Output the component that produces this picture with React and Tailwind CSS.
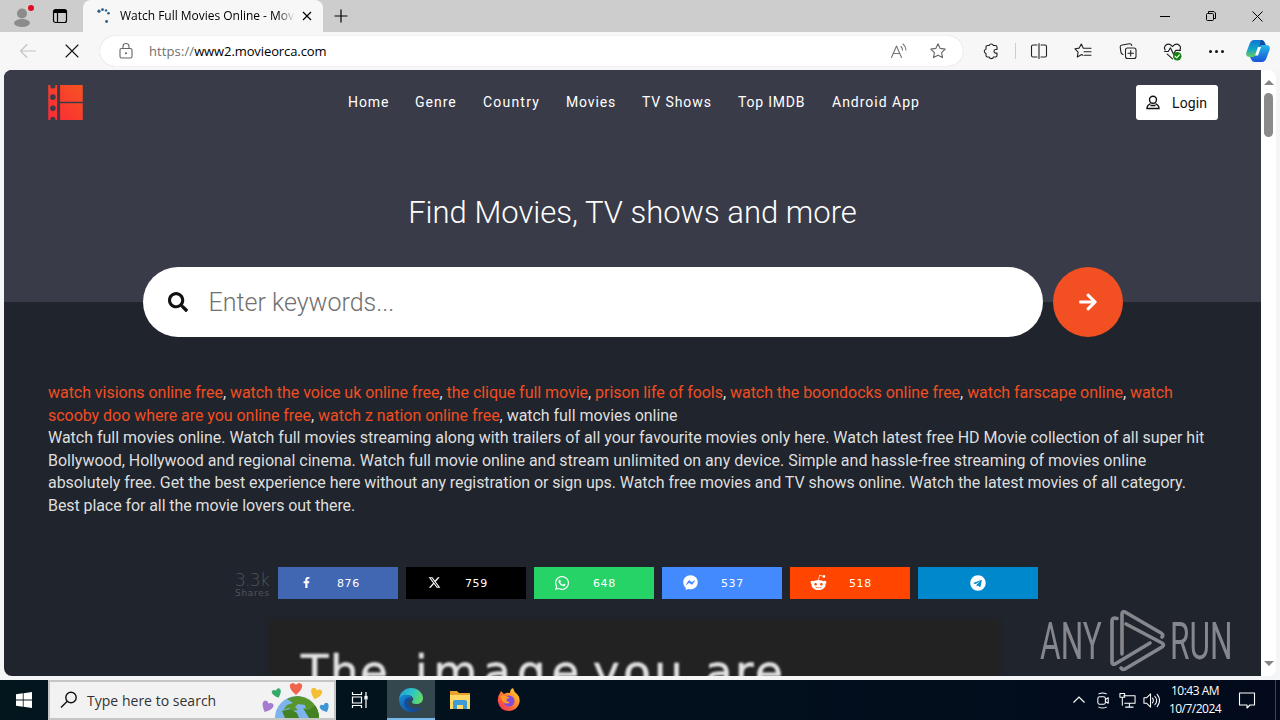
import React from 'react';
import { FaSearch, FaArrowRight, FaFacebookF, FaWhatsapp, FaFacebookMessenger, FaRedditAlien, FaTelegram } from 'react-icons/fa';
import { FaXTwitter } from 'react-icons/fa6';

const navLinks = [
    { name: 'Home', cls: 'w-[41px] tracking-[0.900px]' },
    { name: 'Genre', cls: 'w-[42px] tracking-[1px]' },
    { name: 'Country', cls: 'w-[57px] tracking-[1.200px]' },
    { name: 'Movies', cls: 'w-[50px] tracking-[0.850px]' },
    { name: 'TV Shows', cls: 'w-[70px] tracking-[0.900px]' },
    { name: 'Top IMDB', cls: 'w-[68px] tracking-[0.800px]' },
    { name: 'Android App', cls: 'w-[88px] tracking-[1px]' },
];

const shares = [
    { Icon: FaFacebookF, count: '876', bg: 'bg-[#4267b2]', size: 11 },
    { Icon: FaXTwitter, count: '759', bg: 'bg-black', size: 13 },
    { Icon: FaWhatsapp, count: '648', bg: 'bg-[#25d366]', size: 16 },
    { Icon: FaFacebookMessenger, count: '537', bg: 'bg-[#448aff]', size: 15 },
    { Icon: FaRedditAlien, count: '518', bg: 'bg-[#ff4500]', size: 17 },
    { Icon: FaTelegram, count: '', bg: 'bg-[#0088cc]', size: 16 },
];

const Line = ({ children, size = 18, w = 1.1, color = '#222', className = '' }) => (
    <svg width={size} height={size} viewBox="0 0 18 18" fill="none" stroke={color} strokeWidth={w} strokeLinecap="round" strokeLinejoin="round" className={className}>
        {children}
    </svg>
);

const TitleBar = () => (
    <div className="flex h-8 shrink-0 items-stretch bg-[#cdcdcd] font-['Open_Sans',sans-serif]">
        <div className="flex w-11 items-center justify-center">
            <svg width="24" height="26" viewBox="0 0 24 26">
                <circle cx="12" cy="10.5" r="5" fill="#8d8b8b" />
                <ellipse cx="12" cy="20" rx="8" ry="4" fill="#8d8b8b" />
                <circle cx="21" cy="5" r="3" fill="#e00b1c" />
            </svg>
        </div>
        <div className="flex w-8 items-center justify-center">
            <svg width="16" height="16" viewBox="0 0 16 16" fill="none" stroke="#000" strokeWidth="1.2">
                <rect x="1.5" y="1.5" width="13" height="13" rx="2" />
                <path d="M2 3.5h12" strokeWidth="3" />
                <path d="M5.5 5v9" />
            </svg>
        </div>
        <div className="w-[7px]" />
        <div className="flex w-[240px] items-center rounded-t-lg bg-[#f7f7f7]">
            <svg width="16" height="16" viewBox="0 0 16 16" className="ml-[13px] shrink-0" fill="#285b87">
                <circle cx="3" cy="3.2" r="1.6" />
                <circle cx="6.5" cy="1.6" r="1.4" />
                <circle cx="10" cy="2.4" r="1.2" />
                <circle cx="12.5" cy="5.2" r="1.3" />
                <circle cx="10.6" cy="13.5" r="1.4" />
            </svg>
            <div className="ml-2 w-[175px] whitespace-nowrap bg-linear-to-r from-black from-90% to-transparent to-100% bg-clip-text text-[12px] tracking-[-0.02px] text-transparent">Watch Full Movies Online - Movi</div>
            <svg width="10" height="10" viewBox="0 0 10 10" stroke="#000" strokeWidth="1.2" className="ml-[7px]">
                <path d="M1 1l8 8M9 1l-8 8" />
            </svg>
        </div>
        <div className="flex w-9 items-center justify-center">
            <svg width="14" height="14" viewBox="0 0 14 14" stroke="#000" strokeWidth="1.2">
                <path d="M7 .5v13M.5 7h13" />
            </svg>
        </div>
        <div className="flex-1" />
        <div className="flex w-[46px] items-center justify-center">
            <div className="h-px w-2.5 bg-black" />
        </div>
        <div className="flex w-[46px] items-center justify-center">
            <svg width="10" height="10" viewBox="0 0 10 10" fill="none" stroke="#000">
                <rect x=".5" y="2.5" width="7" height="7" rx="1" />
                <path d="M2.5 2V.5H8L9.5 2v5.5H8" />
            </svg>
        </div>
        <div className="flex w-[46px] items-center justify-center">
            <svg width="11" height="11" viewBox="0 0 11 11" stroke="#000">
                <path d="M.5.5l10 10M10.5.5l-10 10" />
            </svg>
        </div>
    </div>
);

const starPath = 'M9 1.800l2.200 4.600 5 .7-3.600 3.500.9 5L9 13.200l-4.500 2.400.9-5L1.800 7.100l5-.7z';

const Toolbar = () => (
    <div className="flex h-[38px] shrink-0 items-center bg-[#f7f7f7] font-['Open_Sans',sans-serif]">
        <div className="ml-1.5 flex w-11 justify-center">
            <Line color="#c3c3c3"><path d="M16.500 9H1.500M8 2.500L1.500 9 8 15.500" /></Line>
        </div>
        <div className="flex w-11 justify-center">
            <Line color="#111"><path d="M3 3l12 12M15 3L3 15" /></Line>
        </div>
        <div className="ml-1.5 flex h-[30px] w-[863px] items-center rounded-full bg-white shadow-[0_0_1px_#bbb]">
            <Line color="#666" className="ml-[17px]">
                <rect x="3" y="6.500" width="12" height="9.500" rx="1.500" />
                <path d="M6 6.500V4.500a3 3 0 016 0v2" />
                <circle cx="9" cy="11.200" r=".5" fill="#666" />
            </Line>
            <div className="ml-3.5 whitespace-nowrap pt-px text-[13px] text-black"><span className="tracking-[0.100px] text-[#707070]">https://</span><span className="tracking-[-0.100px]">www2.movieorca.com</span></div>
            <div className="flex-1" />
            <Line color="#777">
                <path d="M1.500 15.500L6.500 4l5 11.500M3.200 11.500h6.600M11 4.500q1.500 1.500 1.500 3.500M13 2q3 2.500 3 6" />
            </Line>
            <Line color="#666" className="ml-[21px] mr-4"><path d={starPath} /></Line>
        </div>
        <div className="ml-1.5 flex w-11 justify-center">
            <Line>
                <path d="M5.500 3.500h1.700a2.200 2.200 0 014.200 0h2.100a1.500 1.500 0 011.500 1.500v2.500h-1.200a1.800 1.800 0 000 3.600H15v2.400a1.500 1.500 0 01-1.500 1.500h-2a2.300 2.300 0 01-4.400 0H5.500A1.500 1.500 0 014 13.500v-2a2.200 2.200 0 010-4.300V5a1.500 1.500 0 011.500-1.500z" />
            </Line>
        </div>
        <div className="ml-0.5 h-4 w-px bg-[#ccc]" />
        <div className="ml-px flex w-11 justify-center">
            <Line>
                <path d="M7 3H3a1.500 1.500 0 00-1.500 1.500v9A1.500 1.500 0 003 15h4M9 1.500v15M11 3h4a1.500 1.500 0 011.500 1.500v9A1.500 1.500 0 0115 15h-4" />
            </Line>
        </div>
        <div className="flex w-11 justify-center">
            <Line>
                <path d="M11 6.200l-1.800-.1L7.300 2 5.200 6.100l-4.200.7 3.100 3.300-.8 4.900 4.400-2.400 1.300.7M11.500 6.200H17M10 9.700h7M10.500 13.200H17" />
            </Line>
        </div>
        <div className="flex w-[45px] justify-center">
            <Line>
                <rect x="6.500" y="6" width="10.500" height="10.500" rx="2" />
                <path d="M11.700 8.500v5.500M9 11.200h5.500M4 12.500A3 3 0 012 10.500L1.200 5.200A2 2 0 013 3l7.500-1.300A2 2 0 0112.700 3.500" />
            </Line>
        </div>
        <div className="flex w-11 justify-center">
            <Line size={19}>
                <path d="M2 7.500C0 4 4 1 7 2.500L9 4.200l2-1.700c3-1.500 7 1.500 5 5M1.500 9H5l2-3.500 3 6L12 8h4.500M4 11.500L9 16" />
                <circle cx="13.500" cy="13.500" r="4" fill="#13800f" stroke="none" />
                <path d="M11.500 13.500l1.500 1.500 2.500-2.800" stroke="#fff" />
            </Line>
        </div>
        <div className="flex w-11 justify-center gap-[3px]">
            <div className="h-[3px] w-[3px] rounded-full bg-[#111]" />
            <div className="h-[3px] w-[3px] rounded-full bg-[#111]" />
            <div className="h-[3px] w-[3px] rounded-full bg-[#111]" />
        </div>
        <svg width="24" height="24" viewBox="0 0 24 24" className="ml-2">
            <defs>
                <linearGradient id="cpA" x1="0" y1="0" x2="0" y2="1"><stop stopColor="#0d75d4" /><stop offset=".55" stopColor="#14a5c7" /><stop offset="1" stopColor="#69ca5c" /></linearGradient>
                <linearGradient id="cpB" x1="0" y1="0" x2="0" y2="1"><stop stopColor="#23b9e8" /><stop offset="1" stopColor="#1854d6" /></linearGradient>
            </defs>
            <path d="M8 1h7q3 0 4 3l1 2h-3q-2 0-3 3l-2 6q-1 3-4 3H4q-5 0-3.500-5L3.500 5Q5 1 8 1z" fill="url(#cpA)" />
            <path d="M16 23H9q-3 0-4-3l-1-2h3q2 0 3-3l2-6q1-3 4-3h4q5 0 3.500 5l-3 8Q19 23 16 23z" fill="url(#cpB)" />
            <path d="M15 1q3 0 4 4l.5 1H16q-2 0-3 2z" fill="#134ba4" />
            <path d="M12 8h3l-3 8.500H9z" fill="#fff" />
        </svg>
    </div>
);

const Logo = () => (
    <svg width="35" height="35" viewBox="0 0 35 35.500">
        <defs>
            <linearGradient id="film" x1="1" y1="0" x2="0" y2="1"><stop stopColor="#f55420" /><stop offset="1" stopColor="#fb2838" /></linearGradient>
        </defs>
        <path d="M0 0h9v35.500H0zM12 0h23v17H12zM12 18.500h23v17H12z" fill="url(#film)" />
        <g fill="#3a3b49">
            <circle cx="4.700" cy="1" r="2.600" />
            <circle cx="4.700" cy="12.300" r="2.800" />
            <circle cx="4.700" cy="23.700" r="2.800" />
            <circle cx="4.700" cy="34.800" r="2.600" />
        </g>
    </svg>
);

const Hero = () => (
    <div className="flex h-[232px] shrink-0 flex-col bg-[#3a3b49]">
        <div className="flex h-[65px] shrink-0 items-center">
            <div className="ml-11 w-[300px]"><Logo /></div>
            <div className="flex gap-[26px] whitespace-nowrap pb-px text-[14px] leading-5 text-white">
                {navLinks.map((l) => <a key={l.name} href="#" className={l.cls}>{l.name}</a>)}
            </div>
            <button className="ml-[216px] flex h-[35px] w-[82px] items-center rounded-[3px] bg-white pl-2.5 text-[14px] tracking-[0.100px] text-[#111]">
                <svg width="14" height="15" viewBox="0 0 14 15" fill="none" stroke="#111" strokeWidth="1.400">
                    <circle cx="7" cy="4.700" r="3.500" />
                    <path d="M4.500 8.500L2 10.500q-1 1-1 3h12q0-2-1-3L9.500 8.500M4.500 10.500h5" />
                </svg>
                <span className="ml-3 pt-px">Login</span>
            </button>
        </div>
        <h1 className="mt-[58px] shrink-0 text-center text-[31px] font-light leading-10 tracking-[0.010px] text-white">Find Movies, TV shows and more</h1>
        <div className="mt-[34px] flex h-[70px] shrink-0 justify-center gap-2.5">
            <div className="flex h-[70px] w-[900px] items-center rounded-full bg-white">
                <FaSearch size={20} color="#111" className="ml-[25px]" />
                <span className="ml-[21px] pt-0.5 text-[25px] font-light text-[#707070]">Enter keywords...</span>
            </div>
            <button className="flex h-[70px] w-[70px] items-center justify-center rounded-full bg-[#f25022] text-white">
                <FaArrowRight size={20} />
            </button>
        </div>
    </div>
);

const Tag = ({ children }) => <a href="#" className="text-[#f04e23]">{children}</a>;

const About = () => (
    <div className="ml-11 mt-20 shrink-0 whitespace-nowrap text-[16px] leading-[22.600px] text-[#dedede]">
        <p className="tracking-[-0.042px]"><Tag>watch visions online free</Tag>, <Tag>watch the voice uk online free</Tag>, <Tag>the clique full movie</Tag>, <Tag>prison life of fools</Tag>, <Tag>watch the boondocks online free</Tag>, <Tag>watch farscape online</Tag>, <Tag>watch</Tag></p>
        <p className="tracking-[-0.035px]"><Tag>scooby doo where are you online free</Tag>, <Tag>watch z nation online free</Tag>, watch full movies online</p>
        <p className="tracking-[-0.015px]">Watch full movies online. Watch full movies streaming along with trailers of all your favourite movies only here. Watch latest free HD Movie collection of all super hit</p>
        <p className="tracking-[-0.010px]">Bollywood, Hollywood and regional cinema. Watch full movie online and stream unlimited on any device. Simple and hassle-free streaming of movies online</p>
        <p className="tracking-[-0.064px]">absolutely free. Get the best experience here without any registration or sign ups. Watch free movies and TV shows online. Watch the latest movies of all category.</p>
        <p className="tracking-[-0.080px]">Best place for all the movie lovers out there.</p>
    </div>
);

const ShareBar = () => (
    <div className="mt-[49px] flex h-8 shrink-0 gap-2 font-['DejaVu_Sans',sans-serif]">
        <div className="ml-[231px] w-[35px] whitespace-nowrap pt-[5px] text-[#50545b]">
            <div className="text-[17px] font-extralight leading-[17px] tracking-[-0.700px]">3.3k</div>
            <div className="text-[9px] leading-[9px] tracking-[0.700px]">Shares</div>
        </div>
        {shares.map(({ Icon, count, bg, size }) => (
            <div key={bg} className={`flex h-8 w-[120px] items-center text-white ${bg}`}>
                {count ? (
                    <>
                        <div className="ml-4 flex w-6 justify-center"><Icon size={size} /></div>
                        <span className="ml-[19px] pt-[3px] text-[11px] tracking-[0.600px]">{count}</span>
                    </>
                ) : <div className="flex w-full justify-center"><Icon size={size} /></div>}
            </div>
        ))}
    </div>
);

const Watermark = () => (
    <div className="absolute bottom-0 right-[30px] flex h-[68px] items-center font-['Roboto',sans-serif] text-[51px] text-[#85878c]">
        <span className="w-[64px] origin-left scale-x-[0.620] whitespace-nowrap">ANY</span>
        <svg width="56" height="62" viewBox="0 0 56 62" fill="none" stroke="currentColor" strokeWidth="3.600" strokeLinecap="round" strokeLinejoin="round" className="mb-0.5 ml-[6px]">
            <path d="M7 8.500Q2 7 2 11v41q0 3 3 2l35-21" />
            <path d="M12 44V4q0-3 3-2l36 21q3 2 1 4" />
            <path d="M16 14l36 19q3 2 0 4L15 59q-3 1-4-1" />
        </svg>
        <span className="ml-1 w-[61px] origin-left scale-x-[0.620] whitespace-nowrap">RUN</span>
    </div>
);

const Page = () => (
    <div className="flex h-[610px] shrink-0 bg-[#f3f5f7] px-1 pb-1">
        <div className="relative flex h-[606px] w-[1257px] flex-col overflow-hidden rounded-bl-lg rounded-tl-lg bg-[#20242c] font-['Roboto',sans-serif]">
            <Hero />
            <About />
            <ShareBar />
            <div className="ml-[266px] mt-[22px] h-[70px] w-[728px] shrink-0 bg-[#222] pl-[31px] pt-[25px] shadow-[0_0_5px_#222]">
                <p className="flex whitespace-nowrap font-['DejaVu_Sans',sans-serif] text-[45px] leading-[52px] text-[#e2e2e2] blur-[0.800px] [-webkit-text-stroke:0.600px_#e2e2e2]">
                    <span className="w-[114px] tracking-[1.500px]">The</span>
                    <span className="w-[178px] tracking-[6px]">image</span>
                    <span className="w-[112px] tracking-[3.500px]">you</span>
                    <span className="tracking-[2.500px]">are</span>
                </p>
            </div>
            <Watermark />
        </div>
        <div className="flex w-[15px] flex-col items-center rounded-r-lg bg-white">
            <div className="mt-2.5 border-x-[5px] border-b-[5px] border-x-transparent border-b-[#858585]" />
            <div className="mt-2 h-11 w-[9px] rounded-full bg-[#8a8a8a]" />
            <div className="flex-1" />
            <div className="mb-2.5 border-x-[5px] border-t-[5px] border-x-transparent border-t-[#858585]" />
        </div>
    </div>
);

const heart = 'M0 5Q-6 0-5-3.500-3-6.500 0-3.500 3-6.500 5-3.500 6 0 0 5z';

const Taskbar = () => (
    <div className="flex h-10 shrink-0 items-stretch bg-linear-to-r from-[#03161e] to-[#020a1c] font-['Open_Sans',sans-serif]">
        <div className="flex w-12 items-center justify-center">
            <svg width="16" height="16" viewBox="0 0 16 16" fill="#fff">
                <path d="M0 2.200L6.800 1.300v6.300H0zM7.600 1.200L16 0v7.600H7.600zM0 8.400h6.800v6.300L0 13.800zM7.600 8.400H16V16l-8.400-1.200z" />
            </svg>
        </div>
        <div className="flex w-72 items-center border-2 border-[#c5c5c5] bg-[#f2f2f2]">
            <svg width="18" height="18" viewBox="0 0 18 18" fill="none" stroke="#111" strokeWidth="1.400" className="ml-2.5">
                <circle cx="11" cy="6.500" r="5.200" />
                <path d="M7.300 10.200L1 16.500" />
            </svg>
            <span className="ml-[9px] w-[129px] whitespace-nowrap text-[14px] tracking-[0.020px] text-[#333]">Type here to search</span>
            <svg width="72" height="36" viewBox="0 0 72 36" className="ml-11">
                <defs><clipPath id="globe"><circle cx="37" cy="36" r="22" /></clipPath></defs>
                <circle cx="37" cy="36" r="22" fill="#7db4ee" />
                <g clipPath="url(#globe)">
                    <path d="M27 17q5-3 11-3 14 0 20 10 3 6 3 12H50l2-6-6-3-1-4-7-1-3 3 3 3-5 1-4-3-6 2 4-5 6-2z" fill="#58952a" />
                    <path d="M22 29l8-2 7 4 2 5H25zM43 26l6 2 7-5 5 7v6H49z" fill="#438123" />
                </g>
                <path d={heart} transform="translate(36 7) scale(1.200)" fill="#ef654d" />
                <path d={heart} transform="translate(17 11.500) rotate(-20) scale(.9)" fill="#37a86b" />
                <path d={heart} transform="translate(56 12) rotate(15) scale(1.100)" fill="#f5bf35" />
                <path d={heart} transform="translate(7 25) rotate(25) scale(1.100)" fill="#a57bd0" />
                <path d={heart} transform="translate(65 26) rotate(-25) scale(.9)" fill="#3e95d3" />
            </svg>
        </div>
        <div className="mr-[3px] flex w-12 items-center justify-center">
            <svg width="18" height="18" viewBox="0 0 18 18" fill="none" stroke="#fff" strokeWidth="1.200">
                <path d="M1.500 1v2.500h9V1M1.500 17v-2.500h9V17M1.500 6h9v6h-9zM15 1v4M15 9v8" />
                <rect x="14" y="5.500" width="2" height="2.500" fill="#fff" />
            </svg>
        </div>
        <div className="flex w-12 items-center justify-center border-b-2 border-[#76b9ed] bg-[#34474f]">
            <svg width="24" height="24" viewBox="0 0 24 24" className="mt-0.5">
                <defs>
                    <linearGradient id="edgeTop" x1="0" y1=".2" x2="1" y2=".5"><stop stopColor="#249fd7" /><stop offset=".5" stopColor="#2bc4cb" /><stop offset="1" stopColor="#63da66" /></linearGradient>
                    <linearGradient id="edgeLow" x1="0" y1="0" x2="1" y2="1"><stop stopColor="#168cdb" /><stop offset="1" stopColor="#113f88" /></linearGradient>
                </defs>
                <path d="M0 11C1 4 6 0 12 0c7 0 12 5 12 10 0 4-3 6-7 6-3 0-4-1-4-2s2-2 1-4c-2-4-10-4-14 1z" fill="url(#edgeTop)" />
                <path d="M0 11c2-5 11-6 13 0-4 0-5 4-3 7s7 4 12 1c-2 3-6 5-10 5-7 0-12-6-12-13z" fill="url(#edgeLow)" />
                <path d="M6 12c2-3 6-3 7-1-4 1-5 4-3 7s7 4 12 1c-3 5-8 5-11 3-5-2-7-7-5-10z" fill="#154c9b" />
            </svg>
        </div>
        <div className="flex w-[49px] items-center justify-center">
            <svg width="22" height="20" viewBox="0 0 22 20">
                <path d="M1 1h7l2 2h11v16H1z" fill="#e8a32e" />
                <path d="M1 5h20v14H1z" fill="#ffd866" />
                <path d="M4 19v-7q0-2 2-2h10q2 0 2 2v7h-4v-4H8v4z" fill="#3e9bd6" />
            </svg>
        </div>
        <div className="ml-px flex w-12 items-center justify-center">
            <svg width="24" height="24" viewBox="0 0 24 24">
                <defs><linearGradient id="fox" x1="1" y1="0" x2="0" y2="1"><stop stopColor="#ffe32c" /><stop offset=".45" stopColor="#ff852c" /><stop offset="1" stopColor="#f5215f" /></linearGradient></defs>
                <path d="M3 5l1-2 3 3q3-2 6-1 0-4 3-5 1 4 4 6 4 4 2 10-3 7-10 7-9 0-11-9-1-5 2-9z" fill="url(#fox)" />
                <circle cx="12" cy="13" r="5.500" fill="#8249dc" />
                <path d="M3 8q4-1 6 0l4 2q-3 0-4 2 1 2 4 2-3 3-7 0z" fill="#ff9a26" />
            </svg>
        </div>
        <div className="flex-1" />
        <div className="flex w-6 items-center justify-center">
            <svg width="12" height="8" viewBox="0 0 12 8" fill="none" stroke="#fff" strokeWidth="1.200"><path d="M.5 6.500L6 1l5.500 5.500" /></svg>
        </div>
        <div className="flex w-6 items-center justify-center">
            <Line color="#fff" size={17}>
                <rect x="3" y="5" width="8" height="8" rx="2" /><path d="M11 8l3-2v6l-3-2M4 2q4-2 8 0M4 16q4 2 8 0" />
            </Line>
        </div>
        <div className="flex w-6 items-center justify-center">
            <Line color="#fff" size={17}>
                <path d="M5 4h12v8H6M11 12v4M7 16h8M1 1.500h5v4H1zM3.500 5.500V14" />
            </Line>
        </div>
        <div className="flex w-6 items-center justify-center">
            <Line color="#fff" size={17}>
                <path d="M1 6h3l4-4v14l-4-4H1zM10 6.500q2 2.500 0 5M12.500 4.500q4 4.500 0 9M15 2.500q5 6.500 0 13" />
            </Line>
        </div>
        <div className="ml-[5px] flex w-[54px] flex-col items-center justify-center whitespace-nowrap text-[12px] leading-[18px] tracking-[-0.520px] text-white">
            <span>10:43 AM</span>
            <span>10/7/2024</span>
        </div>
        <div className="flex w-[50px] items-center justify-center">
            <Line color="#fff" size={18}><path d="M1.500 2h15v12H12l-3 3v-3H1.500z" /></Line>
        </div>
        <div className="ml-[3px] mr-1 w-px bg-[#3d434d]" />
    </div>
);

export default function App() {
    return (
        <div className="flex h-[720px] w-[1280px] flex-col overflow-hidden bg-[#f7f7f7]">
            <TitleBar />
            <Toolbar />
            <Page />
            <Taskbar />
        </div>
    );
}
